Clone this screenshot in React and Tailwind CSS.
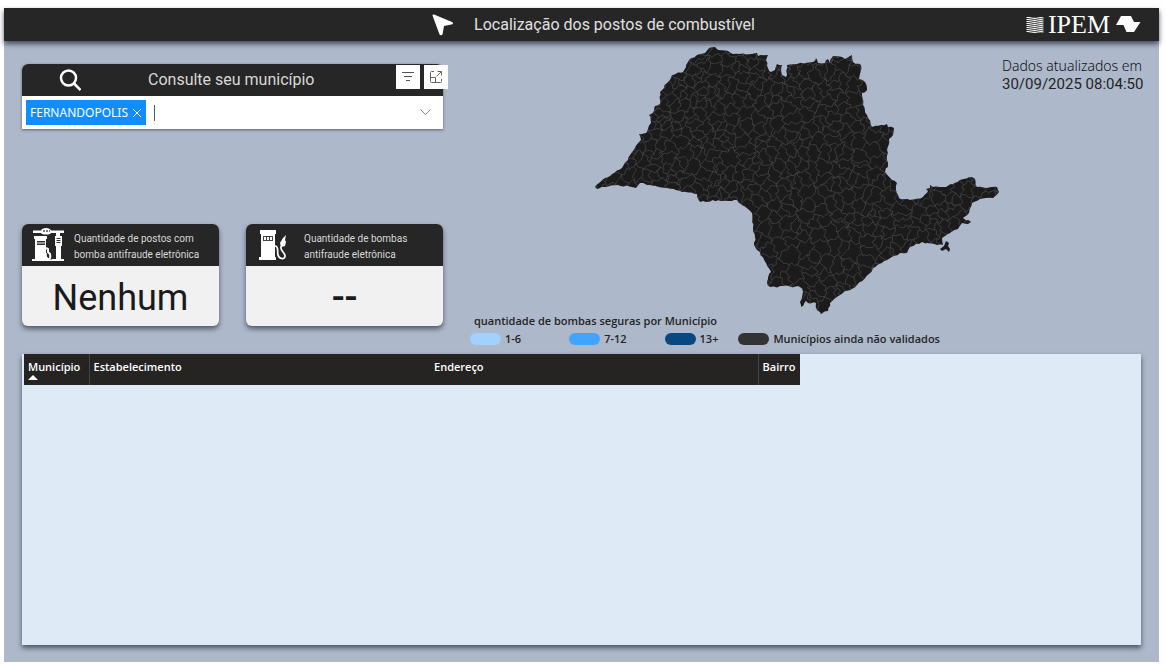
import React from "react";

const OUTLINE = [
  [595,187],[605,178],[622,168],[628,160],[630,155],[635,148],[641,140],[639,134],[646,133],[651,123],[649,115],[654,111],[655,106],[660,104],[660,92],[667,83],[672,75],[683,72],[688,62],[697,55],[705,53],[709,48],[715,47],[718,50],[728,51],[733,54],[752,54],[757,53],[758,56],[768,55],[766,60],[768,68],[771,72],[775,70],[777,64],[782,65],[782,75],[786,77],[787,65],[797,64],[813,62],[816,58],[818,63],[825,63],[828,59],[830,63],[833,56],[842,57],[845,59],[852,55],[853,62],[861,65],[859,79],[865,82],[867,90],[862,93],[863,105],[867,115],[872,127],[887,124],[888,127],[894,128],[893,135],[889,139],[887,150],[888,163],[885,172],[892,180],[897,183],[896,190],[899,198],[910,200],[923,197],[928,191],[926,189],[930,188],[930,185],[933,187],[943,187],[953,184],[960,180],[972,177],[975,179],[977,187],[987,188],[997,187],[999,192],[993,198],[980,199],[972,203],[969,213],[963,218],[971,222],[968,224],[962,223],[958,229],[950,233],[942,238],[943,245],[937,245],[922,242],[910,247],[907,253],[900,253],[887,260],[873,268],[869,274],[857,285],[840,295],[830,303],[828,311],[821,314],[817,310],[816,303],[808,303],[806,301],[801,307],[800,302],[803,292],[800,287],[783,286],[770,287],[767,282],[771,272],[766,263],[757,250],[754,245],[755,237],[753,228],[752,213],[748,209],[742,205],[737,200],[728,201],[703,201],[700,202],[697,194],[682,192],[667,188],[650,185],[640,183],[636,188],[632,187],[618,185],[605,187],[597,189],
];

function randomSource(seed) {
  let s = seed;
  return () => {
    s = (s * 16807) % 2147483647;
    return s / 2147483647;
  };
}

function roughen(points, amount) {
  const rnd = randomSource(77);
  const out = [];
  points.forEach((p, i) => {
    const q = points[(i + 1) % points.length];
    const n = Math.max(1, Math.round(Math.hypot(q[0] - p[0], q[1] - p[1]) / 3));
    for (let k = 0; k < n; k++) {
      const t = k / n;
      const j = k === 0 ? 0 : amount;
      out.push([
        p[0] + (q[0] - p[0]) * t + (rnd() - 0.5) * j,
        p[1] + (q[1] - p[1]) * t + (rnd() - 0.5) * j,
      ]);
    }
  });
  return out;
}

const toPath = (pts) => "M" + pts.map((p) => p[0].toFixed(1) + " " + p[1].toFixed(1)).join("L") + "Z";

// Keeps the part of a polygon that lies nearer to a than to b.
function clipNearer(poly, a, b) {
  const mx = (a[0] + b[0]) / 2;
  const my = (a[1] + b[1]) / 2;
  const nx = b[0] - a[0];
  const ny = b[1] - a[1];
  const side = (p) => (p[0] - mx) * nx + (p[1] - my) * ny;
  const out = [];
  poly.forEach((p, i) => {
    const q = poly[(i + 1) % poly.length];
    const sp = side(p);
    const sq = side(q);
    if (sp <= 0) out.push(p);
    if (sp * sq < 0) {
      const t = sp / (sp - sq);
      out.push([p[0] + (q[0] - p[0]) * t, p[1] + (q[1] - p[1]) * t]);
    }
  });
  return out;
}

// Bends straight cell borders; depends on position only, so neighbours stay joined.
const warp = ([x, y]) => [
  x + 1.5 * Math.sin(y * 0.7 + x * 0.3) + 0.6 * Math.sin(y * 1.7 - x * 0.6),
  y + 1.5 * Math.sin(x * 0.6 - y * 0.3) + 0.6 * Math.sin(x * 1.6 + y * 0.7),
];

function bend(poly) {
  const out = [];
  poly.forEach((p, i) => {
    const q = poly[(i + 1) % poly.length];
    const n = Math.max(1, Math.round(Math.hypot(q[0] - p[0], q[1] - p[1]) / 2));
    for (let k = 0; k < n; k++) out.push(warp([p[0] + ((q[0] - p[0]) * k) / n, p[1] + ((q[1] - p[1]) * k) / n]));
  });
  return out;
}

function municipalityCells() {
  const rnd = randomSource(4211);
  const seeds = [];
  for (let y = 40; y < 325; y += 10) {
    for (let x = 590; x < 1010; x += 10) {
      if (rnd() < (y > 205 && x < 870 ? 0.4 : 0.15)) continue;
      seeds.push([x + rnd() * 12, y + rnd() * 12]);
      if (x < 730 && rnd() < 0.3) seeds.push([x + rnd() * 12, y + rnd() * 12]);
    }
  }
  return seeds.map((s) => {
    let poly = [[s[0] - 22, s[1] - 22], [s[0] + 22, s[1] - 22], [s[0] + 22, s[1] + 22], [s[0] - 22, s[1] + 22]];
    seeds.forEach((o) => {
      if (o !== s && Math.abs(o[0] - s[0]) < 46 && Math.abs(o[1] - s[1]) < 46) poly = clipNearer(poly, s, o);
    });
    return toPath(bend(poly));
  }).join("");
}

const STATE_PATH = toPath(roughen(OUTLINE, 1.8));
const CELLS_PATH = municipalityCells();

function StateMap() {
  return (
    <svg viewBox="594 46 406 270" className="block w-[406px] max-w-full" role="img" aria-label="Mapa do estado de São Paulo">
      <defs>
        <clipPath id="state"><path d={STATE_PATH} /></clipPath>
      </defs>
      <path d={STATE_PATH} fill="#1b1b1b" />
      <path d="M946 241L949 243 948 246 950 249 949 252 946 249 942 251 940 249 944 246Z" fill="#1b1b1b" />
      <path d={CELLS_PATH} clipPath="url(#state)" fill="none" stroke="#4f4f4f" strokeWidth="0.4" />
    </svg>
  );
}

function StationIcon() {
  return (
    <svg viewBox="0 0 33 34" className="h-[34px] w-[33px]" fill="#fff" aria-hidden="true">
      <path d="M1 2.500h8q1-2.500 5-2.500t5 2.500h13v2.500h-4v3h-4V5h-5q-1 1.500-5 1.500T9 5H1z" />
      <path d="M11 3h2M14 3h2M17 3h1" stroke="#555" strokeWidth="1.500" />
      <path d="M3 8h12v3h-1v19h1v3H0v-2h3V11H2V8zM23 8h7v10h-1v13h3v2H20v-2h4V18h-1z" />
      <path d="M5 13h8v4H5zM24.500 10h4v1h-4zM24.500 12h4v1h-4zM24.500 14h4v1h-4z" fill="#333" />
      <path d="M6 14v2M8 14v2M10 14v2M12 14v2" stroke="#eee" />
      <path d="M14 20l2 1v3l2 2q1 6-2 5t-2-6" fill="none" stroke="#fff" strokeWidth="2" />
      <path d="M0 31.500h32V33H0z" />
    </svg>
  );
}

function PumpIcon() {
  return (
    <svg viewBox="0 0 28 31" className="h-[31px] w-[28px]" fill="#fff" aria-hidden="true">
      <path d="M1 0h16v4h-1v23h1v3H0v-3h2V4H1z" />
      <path d="M4 6h10v5H4z" fill="#444" />
      <path d="M5 7h2v3H5zM8 7h2v3H8zM11 7h2v3h-2z" />
      <path d="M16 16c4 0 2 5 3 9s7 5 7 1-5-5-4-9l2-4" fill="none" stroke="#fff" strokeWidth="1.700" />
      <path d="M27 5l-3 3-3 5 1 4 4-1 1-4-1-2z" />
    </svg>
  );
}

function IpemLogo() {
  return (
    <div className="flex items-center">
      <svg viewBox="0 0 18 16" className="h-4 w-[18px]" fill="none" stroke="#fff" aria-hidden="true">
        {[1, 3, 5, 7, 9, 11, 13, 15].map((y) => (
          <path key={y} d={`M0.500 ${y - 0.5}C5 ${y - 1} 6 ${y + 1} 10 ${y + 0.3}S15 ${y - 0.8} 17.500 ${y}`} strokeWidth="1.100" />
        ))}
      </svg>
      <span className="ml-1 font-['Liberation_Serif',serif] text-[26px] leading-8 text-white">IPEM</span>
      <svg viewBox="0 0 25 17" className="ml-1.5 h-[17px] w-[25px]" aria-hidden="true">
        <path d="M5 0h10l3 6h6.500L18 16h-7.500L7.500 9H0z" fill="#fff" />
      </svg>
    </div>
  );
}

function StatCard({ icon, iconBox, lines, valueStyle, children }) {
  return (
    <section className="w-[197px] overflow-hidden rounded-md bg-[#f1f1f1] shadow-[0_3px_5px_rgba(30,40,55,0.65)]">
      <div className="flex h-[42px] items-center bg-[#262626] pl-2.5">
        <div className={`flex shrink-0 ${iconBox}`}>{icon}</div>
        <h2 className="whitespace-pre-line pt-1 font-[Roboto,sans-serif] text-[10px] leading-4 text-[#d8d8d8]">{lines}</h2>
      </div>
      <div className={`flex h-[60px] items-center justify-center text-[#1a1a1a] ${valueStyle}`}>{children}</div>
    </section>
  );
}

function LegendItem({ swatch, label, spacing }) {
  return (
    <li className={`flex items-center gap-1 ${spacing}`}>
      <span className={`h-3 w-[31px] rounded-full ${swatch}`} />
      <span>{label}</span>
    </li>
  );
}

export default function App() {
  return (
    <div className="min-h-screen bg-white pt-2 pr-2 pb-1.5 pl-1 font-['Noto_Sans',sans-serif] text-[#252423]">
      <div className="flex min-h-[calc(100vh-14px)] flex-col bg-[#adb8cb]">
        <header className="grid h-[33px] grid-cols-[1fr_auto_1fr] items-center bg-[#262626] shadow-[0_3px_5px_rgba(30,40,55,0.75)]">
          <span />
          <div className="flex items-center gap-5 pl-6">
            <svg viewBox="0 0 22 22" className="h-[22px] w-[22px]" fill="#fff" aria-hidden="true">
              <path d="M0.500 1.500Q0.500 0 2 0.500L20 8Q22 9 20.500 10.300L12 12 10.500 20.500Q9 22 7.500 20.500Z" />
            </svg>
            <h1 className="font-[Roboto,sans-serif] text-[16px] text-[#e0e0e0]">Localização dos postos de combustível</h1>
          </div>
          <div className="flex justify-end pr-[18px]"><IpemLogo /></div>
        </header>

        <div className="flex justify-between pr-4 pl-[18px]">
          <div className="w-[421px] shrink-0 pt-[23px]">
            <form className="rounded-t-md bg-white shadow-[0_1px_3px_rgba(30,40,55,0.6)]" onSubmit={(e) => e.preventDefault()}>
              <div className="flex h-8 items-center rounded-t-md bg-[#262626] pl-[37px]">
                <svg viewBox="0 0 22 22" className="h-[22px] w-[22px]" fill="none" stroke="#fff" strokeWidth="2.500" aria-hidden="true">
                  <circle cx="9.500" cy="9" r="7.500" />
                  <path d="M15 14.500l6.500 6.500" />
                </svg>
                <label htmlFor="municipio" className="ml-[67px] font-[Roboto,sans-serif] text-[16px] text-[#d8d8d8]">Consulte seu município</label>
                <div className="-mr-[5px] mb-[7px] ml-auto flex gap-1">
                  <button type="button" aria-label="Filtros" className="flex size-6 items-center justify-center bg-white">
                    <svg viewBox="0 0 14 12" className="h-3 w-3.5" stroke="#555" aria-hidden="true"><path d="M1 1.500h12M3 5.500h8M5 9.500h4" /></svg>
                  </button>
                  <button type="button" aria-label="Modo de foco" className="flex size-6 items-center justify-center bg-white">
                    <svg viewBox="0 0 14 14" className="h-3.5 w-3.5" fill="none" stroke="#666" aria-hidden="true">
                      <path d="M5 1.500H2.500q-1 0-1 1v9q0 1 1 1h9q1 0 1-1V9M8.500 1.500h4v4M12.500 1.500L7.500 6.500M1.500 7.500h5v5" />
                    </svg>
                  </button>
                </div>
              </div>
              <div className="flex h-[33px] items-center px-1">
                <span className="flex h-[25px] items-center gap-1 bg-[#118dff] px-1 text-white">
                  <span className="text-[12px]">FERNANDOPOLIS</span>
                  <button type="button" aria-label="Remover FERNANDOPOLIS">
                    <svg viewBox="0 0 10 10" className="size-2.5" stroke="#fff" aria-hidden="true"><path d="M1 1l8 8M9 1l-8 8" /></svg>
                  </button>
                </span>
                <input id="municipio" type="text" className="ml-2 h-4 min-w-0 flex-1 border-l border-[#555] pl-1 text-[12px] outline-none" />
                <button type="button" aria-label="Abrir lista" className="px-2">
                  <svg viewBox="0 0 11 7" className="h-[7px] w-[11px]" fill="none" stroke="#888" aria-hidden="true"><path d="M0.500 0.500l5 5 5-5" /></svg>
                </button>
              </div>
            </form>
            <div className="mt-[95px] flex justify-between">
              <StatCard
                icon={<StationIcon />}
                iconBox="w-[42px]"
                lines={"Quantidade de postos com\nbomba antifraude eletrônica"}
                valueStyle="pt-1 font-[Roboto,sans-serif] text-[36px]"
              >
                Nenhum
              </StatCard>
              <StatCard
                icon={<PumpIcon />}
                iconBox="w-12 pl-[3px]"
                lines={"Quantidade de bombas\nantifraude eletrônica"}
                valueStyle="pb-1 text-[40px] font-medium"
              >
                --
              </StatCard>
            </div>
          </div>

          <div className="ml-[27px] flex min-w-0 flex-1 flex-col pt-[5px]">
            <div className="flex justify-end pr-0.5"><StateMap /></div>
            <div className="-mt-[3px] font-['Open_Sans',sans-serif] text-[11px] font-semibold leading-4">
              <h2 className="pl-1">quantidade de bombas seguras por Município</h2>
              <ul className="mt-0.5 flex">
                <LegendItem swatch="bg-[#a0d1ff]" label="1-6" spacing="mr-12" />
                <LegendItem swatch="bg-[#41a4ff]" label="7-12" spacing="mr-[38px]" />
                <LegendItem swatch="bg-[#094780]" label="13+" spacing="mr-5" />
                <LegendItem swatch="bg-[#333333]" label="Municípios ainda não validados" spacing="mr-0" />
              </ul>
            </div>
          </div>

          <div className="w-[141px] shrink-0 whitespace-nowrap pt-4 leading-[18px]">
            <p className="text-[14px] font-light text-[#111]">Dados atualizados em</p>
            <p className="font-[Roboto,sans-serif] text-[15px]">30/09/2025 08:04:50</p>
          </div>
        </div>

        <main className="mx-[18px] mt-[7px] mb-[17px] flex-1 bg-[#deeaf6] pl-0.5 shadow-[0_3px_5px_rgba(30,40,55,0.7)]">
          <table className="w-[776px] table-fixed border-collapse bg-[#252423] text-left font-['Open_Sans',sans-serif] text-[11px] leading-4 text-white">
            <thead>
              <tr className="h-[31px] align-top">
                <th className="w-[65px] border-r border-[#444] px-1 pt-[5px] font-semibold" aria-sort="ascending">
                  Município
                  <svg viewBox="0 0 10 5" className="block h-[5px] w-2.5" fill="#fff" aria-hidden="true"><path d="M0 5l5-5 5 5z" /></svg>
                </th>
                <th className="w-[341px] px-1 pt-[5px] font-semibold">Estabelecimento</th>
                <th className="w-[328px] border-r border-[#444] px-1 pt-[5px] font-semibold">Endereço</th>
                <th className="px-1 pt-[5px] font-semibold">Bairro</th>
              </tr>
            </thead>
          </table>
        </main>
      </div>
    </div>
  );
}
